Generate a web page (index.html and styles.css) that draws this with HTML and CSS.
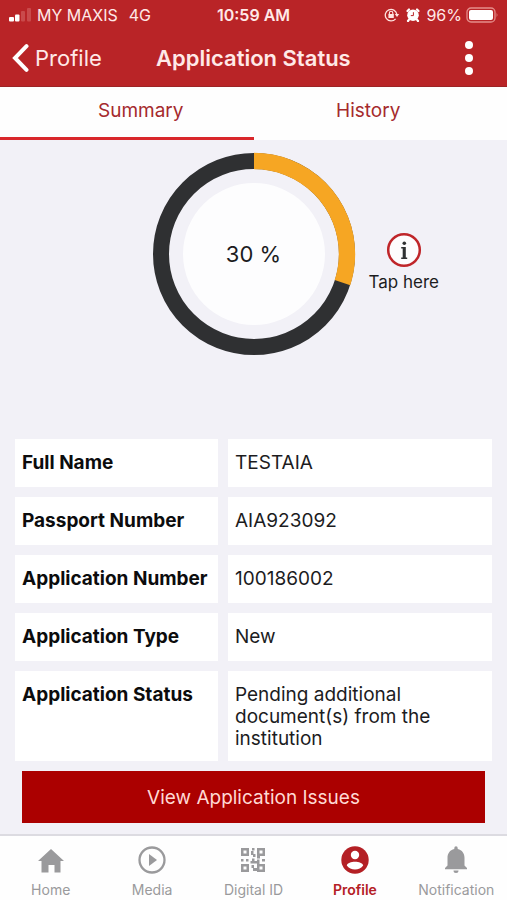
FILE: index.html
```html
<!DOCTYPE html>
<html lang="en">
<head>
<meta charset="utf-8">
<meta name="viewport" content="width=device-width, initial-scale=1">
<title>Application Status</title>
<link rel="stylesheet" href="styles.css">
</head>
<body>
<div class="app">
  <header class="header">
    <div class="statusbar">
      <div class="carrier">
        <svg class="signal" width="24" height="14" viewBox="0 0 24 14" aria-hidden="true">
          <rect x="1" y="9" width="5" height="4.500" rx="1" fill="#fff"/>
          <rect x="7" y="6.500" width="4.500" height="7" rx="1" fill="#fff"/>
          <rect x="13" y="3" width="4" height="10.500" rx="1" fill="#c94a4b"/>
          <rect x="19" y="0" width="4" height="13.500" rx="1" fill="#c94a4b"/>
        </svg>
        <span>MY MAXIS</span>
        <span class="network">4G</span>
      </div>
      <div class="clock">10:59 AM</div>
      <div class="indicators">
        <svg width="16" height="14" viewBox="0 0 16 14" fill="none" stroke="#ffe3e0" aria-hidden="true">
          <path d="M11.600 10.800A5.800 5.800 0 1 1 12.800 6.200" stroke-width="1.300"/>
          <path d="M10.800 6h4.400L13 9z" fill="#ffe3e0" stroke="none"/>
          <rect x="4.400" y="6" width="5.400" height="4" fill="#ffe3e0" stroke="none"/>
          <path d="M5.400 6.400V5a1.700 1.700 0 0 1 3.400 0v1.400" stroke-width="1.100"/>
        </svg>
        <svg class="alarm" width="14" height="14" viewBox="0 0 14 14" aria-hidden="true">
          <circle cx="7" cy="7.200" r="5.800" fill="#fff"/>
          <path d="M1.500 3 3 1.500M12.500 3 11 1.500M3 11.600 2 13M11 11.600l1 1.400" stroke="#fff" stroke-width="2.200" stroke-linecap="round"/>
          <path d="M7.400 4.200v3.400H4.800" fill="none" stroke="#b92427" stroke-width="1"/>
        </svg>
        <span>96%</span>
        <svg width="33" height="16" viewBox="0 0 33 16" aria-hidden="true">
          <rect x="1" y="1" width="28" height="14" rx="4" fill="none" stroke="#e58d8a" stroke-width="1.300"/>
          <rect x="3" y="3" width="24" height="10" rx="2" fill="#fff"/>
          <path d="M30.600 5.500q1.800 2.500 0 5z" fill="#e58d8a"/>
        </svg>
      </div>
    </div>
    <div class="navbar">
      <a class="back" href="#profile">
        <svg width="17" height="28" viewBox="0 0 17 28" fill="none" stroke="#fff" stroke-width="4" stroke-linecap="round" stroke-linejoin="miter" aria-hidden="true"><path d="M14.500 2.200 3 14l11.500 11.800"/></svg>
        <span>Profile</span>
      </a>
      <h1 class="title">Application Status</h1>
      <button class="more" type="button" aria-label="More options">
        <svg width="8" height="36" viewBox="0 0 8 36" fill="#fff" aria-hidden="true"><circle cx="4" cy="5" r="4"/><circle cx="4" cy="18" r="4"/><circle cx="4" cy="31" r="4"/></svg>
      </button>
    </div>
  </header>

  <nav class="tabs" aria-label="Sections">
    <a class="tab active" href="#summary" aria-current="page">Summary</a>
    <a class="tab" href="#history">History</a>
  </nav>

  <main class="content">
    <section class="progress">
      <div class="ring">
        <svg viewBox="0 0 204 204" aria-hidden="true">
          <circle cx="102" cy="102" r="93" fill="none" stroke="#2f3032" stroke-width="16"/>
          <circle cx="102" cy="102" r="93" fill="none" stroke="#f6a623" stroke-width="16.400" pathLength="100" stroke-dasharray="30 70" transform="rotate(-90 102 102)"/>
          <circle cx="102" cy="102" r="71" fill="#fdfdfe"/>
        </svg>
        <span class="percent">30 %</span>
      </div>
      <button class="info" type="button">
        <svg width="36" height="36" viewBox="0 0 36 36" aria-hidden="true">
          <circle cx="18" cy="18" r="15.800" fill="#fdfcfd" stroke="#bf2529" stroke-width="2.500"/>
          <circle cx="18.300" cy="11.300" r="1.800" fill="#2f3032"/>
          <path d="M15.200 15h4.600v10.500h1.400V27h-6v-1.500h1.500v-9h-1.500z" fill="#2f3032"/>
        </svg>
        <span>Tap here</span>
      </button>
    </section>

    <table class="details">
      <tbody>
        <tr><th scope="row">Full Name</th><td>TESTAIA</td></tr>
        <tr><th scope="row">Passport Number</th><td>AIA923092</td></tr>
        <tr><th scope="row">Application Number</th><td>100186002</td></tr>
        <tr><th scope="row">Application Type</th><td>New</td></tr>
        <tr><th scope="row">Application Status</th><td>Pending additional document(s) from the institution</td></tr>
      </tbody>
    </table>

    <button class="issues" type="button">View Application Issues</button>
  </main>

  <nav class="bottom" aria-label="Main">
    <a href="#home">
      <svg width="28" height="28" viewBox="0 0 28 28" fill="currentColor" aria-hidden="true"><path d="M14 3 27 15h-3.500v11.500h-6V19h-6v7.500h-7V15H1z"/></svg>
      <span>Home</span>
    </a>
    <a href="#media">
      <svg width="28" height="28" viewBox="0 0 28 28" fill="currentColor" aria-hidden="true"><circle cx="14" cy="14" r="12.500" fill="none" stroke="currentColor" stroke-width="2.300"/><path d="M11 8v12l8-6z"/></svg>
      <span>Media</span>
    </a>
    <a href="#digital-id">
      <svg width="28" height="28" viewBox="0 0 28 28" fill="currentColor" aria-hidden="true">
        <path fill-rule="evenodd" d="M2 2h8v8H2zM4.500 4.500v3h3v-3zM18 2h8v8h-5v2.500h-3zM20.500 4.500v3h3v-3zM2 18h8v8H2zM4.500 20.500v3h3v-3zM18 18h8v8h-8zM20.500 20.500v3h3v-3z"/>
        <path d="M13 2h2.500v2.500H13zM12 5h2.500v4H12zM14 8h2.500v3H14zM2 13h2.500v2.500H2zM7 13h2.500v2.500H7zM13 12.500h2.500V15h3v2.500h-7V15H13zM18 13.500h2.500V18H18zM23 13h3v2.500h-3zM12.500 19H15v3h-2.500zM14 22h4v3h-4z"/>
      </svg>
      <span>Digital ID</span>
    </a>
    <a class="current" href="#profile" aria-current="page">
      <svg width="28" height="28" viewBox="0 0 28 28" fill="currentColor" aria-hidden="true"><circle cx="14" cy="14" r="13.700"/><circle cx="14" cy="9" r="4.200" fill="#fff"/><path d="M5.800 19.500C7 14.600 21 14.600 22.200 19.500c-3.500 5.200-12.900 5.200-16.400 0z" fill="#fff"/></svg>
      <span>Profile</span>
    </a>
    <a href="#notification">
      <svg width="28" height="28" viewBox="0 0 28 28" fill="currentColor" aria-hidden="true"><path d="M12.300 2a1.700 1.700 0 0 1 3.400 0v1c4.500 1 6.800 4.500 6.800 9v7.500l2.500 2.500v1.200H3V22l2.500-2.500V12c0-4.500 2.300-8 6.800-9zM11.500 24.500h5a2.500 2.500 0 0 1-5 0z"/></svg>
      <span>Notification</span>
    </a>
  </nav>
</div>
</body>
</html>
```
FILE: styles.css
```css
* {
  box-sizing: border-box;
}

body {
  margin: 0;
  font-family: Inter, "Liberation Sans", sans-serif;
  background: #f2f1f7;
  color: #1c1c1e;
}

a {
  color: inherit;
  text-decoration: none;
}

button {
  padding: 0;
  border: 0;
  background: none;
  color: inherit;
  font: inherit;
}

svg {
  display: block;
}

.app {
  display: flex;
  flex-direction: column;
  min-height: 100vh;
}

.header {
  background: #b92427;
  border-bottom: 1px solid #9c2426;
  color: #ffe9e7;
}

.statusbar,
.navbar {
  display: grid;
  align-items: center;
}

.statusbar {
  grid-template-columns: 1fr auto 1fr;
  height: 30px;
  padding: 0 8px;
  font-size: 16px;
}

.carrier,
.indicators {
  display: flex;
  align-items: center;
}

.carrier {
  gap: 5px;
}

.network {
  margin-left: 6px;
}

.clock {
  font-weight: 600;
}

.indicators {
  justify-content: flex-end;
  gap: 4px;
}

.alarm {
  margin: 0 2px;
}

.navbar {
  grid-template-columns: 144px 1fr auto;
  height: 56px;
  padding: 0 34px 0 12px;
  font-size: 22px;
}

.back {
  display: flex;
  align-items: center;
  gap: 6px;
}

.title {
  margin: 0;
  font-size: 22px;
  font-weight: 600;
}

.tabs {
  display: grid;
  grid-template-columns: 1fr 1fr;
  background: #fefefe;
  color: #a52a2d;
}

.tab {
  height: 53px;
  padding: 10px 24px 0 0;
  border-bottom: 3px solid transparent;
  font-size: 19px;
  line-height: 28px;
  text-align: center;
}

.tab.active {
  padding: 10px 0 0 28px;
  border-color: #d9272b;
}

.content {
  flex: 1;
  display: flex;
  flex-direction: column;
}

.progress {
  display: grid;
  grid-template-columns: 1fr 204px 1fr;
  align-items: center;
  padding: 12px 0 73px;
}

.ring {
  grid-column: 2;
  display: grid;
  place-items: center;
}

.ring > * {
  grid-area: 1 / 1;
}

.ring svg {
  width: 100%;
}

.percent {
  font-size: 22px;
}

.info {
  display: flex;
  flex-direction: column;
  align-items: center;
  justify-self: start;
  gap: 4px;
  margin: 16px 0 0 13px;
  font-size: 17px;
  line-height: 20px;
}

.details {
  width: calc(100% - 10px);
  margin: 0 5px;
  border-spacing: 10px;
  font-size: 19px;
  line-height: 22px;
  text-align: left;
}

.details th,
.details td {
  height: 48px;
  padding: 13px 7px 11px;
  background: #fff;
  vertical-align: top;
}

.details th {
  width: 203px;
  color: #0c0c0d;
  font-weight: 700;
  white-space: nowrap;
}

.details td {
  padding-right: 48px;
}

.issues {
  height: 52px;
  margin: 0 22px 11px;
  background: #ab0000;
  color: #ffd9d4;
  font-size: 19px;
}

.bottom {
  display: grid;
  grid-template-columns: repeat(5, 1fr);
  height: 66px;
  border-top: 2px solid #dcdbe1;
  background: #fefefe;
  color: #9a9a9c;
  font-size: 14px;
  line-height: 18px;
}

.bottom a {
  display: flex;
  flex-direction: column;
  align-items: center;
  gap: 7px;
  padding-top: 10px;
}

.bottom .current {
  color: #b42025;
  font-weight: 600;
}
```
